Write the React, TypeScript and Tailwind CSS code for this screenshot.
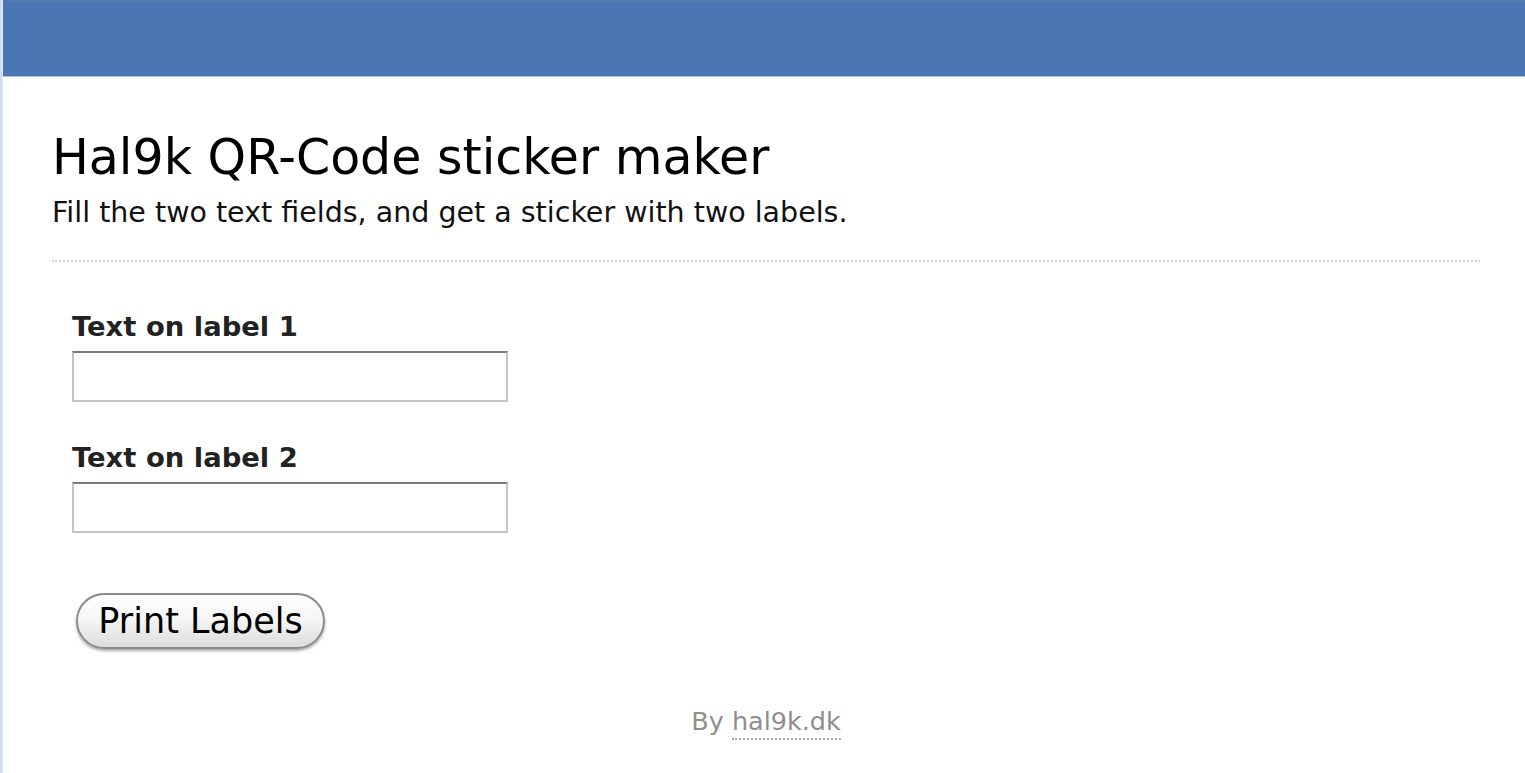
import React from "react";

export default function App() {
  const font = { fontFamily: '"DejaVu Sans", Verdana, sans-serif' };
  return (
    <div className="w-[1525px] h-[773px] bg-white flex overflow-hidden" style={font}>
      <div className="w-[3px] h-full bg-gradient-to-r from-[#c9d8ee] to-[#e3ebf6] shrink-0" />
      <div className="flex-1 flex flex-col">
        <div className="h-[77px] bg-[#4a76b3] border-t border-[#5a7aa8] border-b border-b-[#aec3e0]" />
        <div className="pl-[49px] pr-[45px] pt-[55px]">
          <h1 className="text-[49px] leading-[52px] text-black">Hal9k QR-Code sticker maker</h1>
          <p className="text-[28.5px] leading-[30px] mt-[14px] text-[#111]">Fill the two text fields, and get a sticker with two labels.</p>
          <div className="mt-[32px] border-t-2 border-dotted border-[#d4d4d4]" />
          <div className="pl-[20px] pt-[49px] flex flex-col">
            <label className="text-[27.4px] font-bold leading-[32px] text-[#222]">Text on label 1</label>
            <input className="mt-[8px] w-[436px] h-[51px] border-2 border-[#c4c4c4] border-t-[#7b7b7b] bg-white outline-none" />
            <label className="mt-[40px] text-[27.4px] font-bold leading-[32px] text-[#222]">Text on label 2</label>
            <input className="mt-[8px] w-[436px] h-[51px] border-2 border-[#c4c4c4] border-t-[#7b7b7b] bg-white outline-none" />
            <button className="mt-[60px] ml-[4px] self-start w-[249px] h-[56px] rounded-full border-2 border-[#8a8a8a] bg-gradient-to-b from-white via-[#f4f4f4] to-[#dcdcdc] shadow-[0_2px_3px_rgba(0,0,0,0.35)] text-[35px] leading-none text-black">
              Print Labels
            </button>
          </div>
          <div className="mt-[58px] flex justify-center items-start text-[25.5px] leading-[28px] text-[#8e8e8e]">
            <span>By&nbsp;</span>
            <span className="pb-[3px] border-b-2 border-dotted border-[#aaa]">hal9k.dk</span>
          </div>
        </div>
      </div>
    </div>
  );
}
